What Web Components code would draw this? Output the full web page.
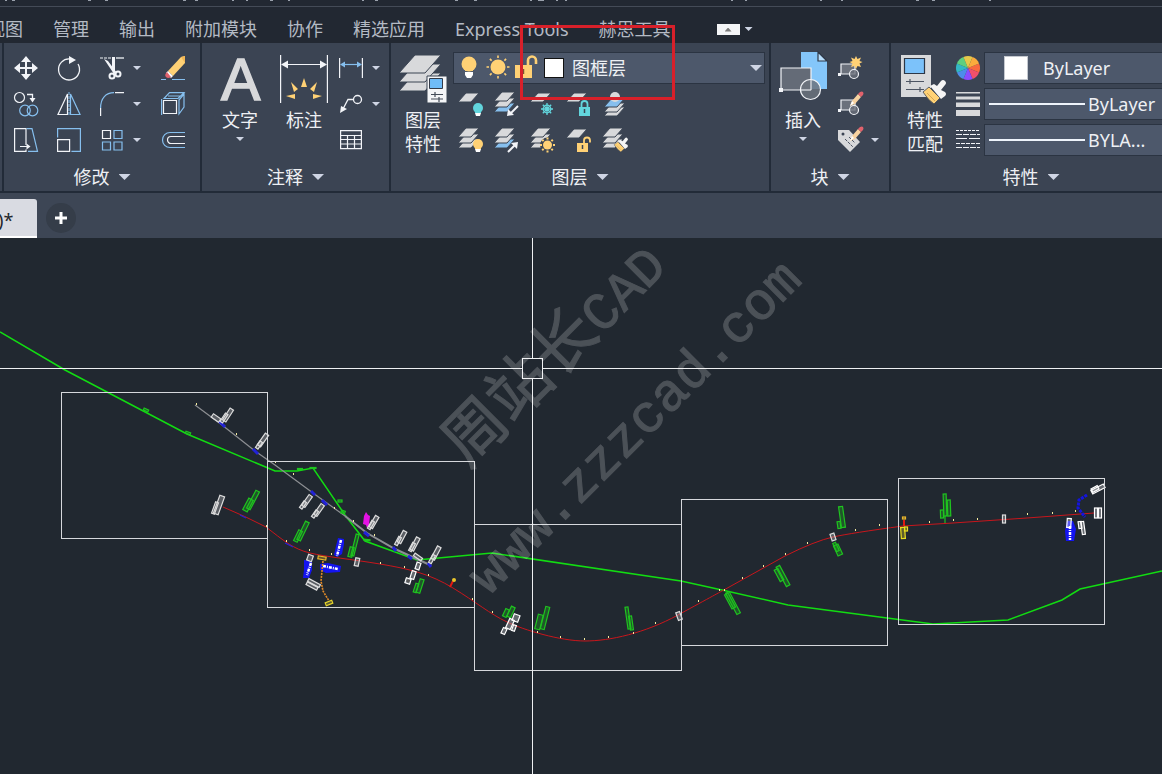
<!DOCTYPE html>
<html lang="zh-CN">
<head>
<meta charset="utf-8">
<title>CAD</title>
<style>
    html, body {
        height: 100%;
        margin: 0;
    }

    body {
        --bar: #222832;
        --ribbon: #3b4453;
        --edge: #222b38;
        --field: #4d586b;
        --caret: #cfd5e4;
        font: 18px/24px "Noto Sans", "Noto Sans CJK SC", sans-serif;
        color: #eef0f4;
        background: #212830;
        overflow: hidden;
    }
</style>
</head>
<body>
<cad-app></cad-app>

<script>
const W = '#f2f4f8';
const B = '#86bfee';
const G = '#d8d9db';
const Y = '#ffd175';
const BG = '#3b4453';

// one sheet of the layer stack
const sheet = (x, y, fill = G, k = 1) =>
    `<path d="M${x + 8 * k} ${y}h${13 * k}l${-8 * k} ${9 * k}h${-13 * k}z" fill="${fill}" stroke="${BG}" stroke-width="1"/>`;
const stack = (a = G, b = G, c = G) => sheet(0, 11, c) + sheet(0, 6, b) + sheet(0, 0, a);
const bulb = (x, y, fill) =>
    `<circle cx="${x}" cy="${y}" r="5" fill="${fill}"/><path d="M${x - 3} ${y + 3}h6v2h-6z" fill="${fill}"/><path d="M${x - 3} ${y + 5}h6l-1 3h-4z" fill="#fff"/>`;
const lock = (x, y, fill, open) =>
    `<path d="M${x} ${y}h11v9h-11z" fill="${fill}"/><path d="M${x + 5.5} ${y + 2}v4" stroke="${BG}" stroke-width="1.5"/>` +
    `<path d="${open ? `M${x + 7} ${y}v-2.500a3 3 0 0 1 6 0v2` : `M${x + 2.500} ${y}v-3a3 3 0 0 1 6 0v3`}" fill="none" stroke="${fill}" stroke-width="1.8"/>`;
const pencil = (x, y) =>
    `<g transform="translate(${x} ${y})"><path d="M0 13l2-5 6-7 3 3-6 7z" fill="#f8d3a0"/><path d="M0 13l2-5 2 2z" fill="#fff"/><path d="M8 1l2-2q2-1 3 0t0 3l-2 2z" fill="#e0626c"/></g>`;
const brush = (x, y, k = 1) =>
    `<g transform="translate(${x} ${y}) scale(${k})"><path d="M-3 3l6-5 11 11-6 6q-6-4-11-12z" fill="${Y}" stroke="${BG}" stroke-width=".8"/><path d="M1 4l8 8" stroke="#b88c40" stroke-width=".6"/><path d="M4-3l4-2 3 2 4-5q2-2 4 0t0 4l-4 5 4 2q2 2 0 4l-4 3z" fill="#f5f5f5"/></g>`;
const blockGlyph = `<path d="M3 8h14v10H3z" fill="#6b717c" stroke="${W}" stroke-width="1.200"/><path d="M0 17h3v3H0z" fill="${W}"/><circle cx="16" cy="18" r="4.500" fill="#6b717c" fill-opacity=".8" stroke="${W}" stroke-width="1.200"/>`;
const rays = (cx, cy, r1, r2, n, c, w) => {
    let d = '';
    for (let i = 0; i < n; i++) {
        const a = i * 2 * Math.PI / n;
        d += `M${(cx + r1 * Math.cos(a)).toFixed(1)} ${(cy + r1 * Math.sin(a)).toFixed(1)}L${(cx + r2 * Math.cos(a)).toFixed(1)} ${(cy + r2 * Math.sin(a)).toFixed(1)}`;
    }
    return `<path d="${d}" stroke="${c}" stroke-width="${w}"/>`;
};
const wheel = () => {
    const colors = ['#f9693f', '#f0506b', '#8b4dff', '#4d8dea', '#33b8c4', '#5fcf7e', '#e6c84a', '#fbab3c'];
    return colors.map((c, i) => {
        const p = k => `${(12 + 12 * Math.cos(k * Math.PI / 4)).toFixed(2)} ${(12 + 12 * Math.sin(k * Math.PI / 4)).toFixed(2)}`;
        return `<path d="M12 12L${p(i - .5)}A12 12 0 0 1 ${p(i + .5)}z" fill="${c}"/>`;
    }).join('');
};

const ICONS = {
    move: `<path d="M12 3v18M3 12h18" stroke="${W}" stroke-width="2"/><path d="M12 0l5 6H7zM12 24l5-6H7zM0 12l6-5v10zM24 12l-6-5v10z" fill="${W}"/>`,
    rotate: `<path d="M13 3a10.500 10.500 0 1 0 8 5" fill="none" stroke="${W}" stroke-width="1.300"/><path d="M12 0l7 4-7 4z" fill="${W}"/>`,
    trim: `<path d="M0 2h12" stroke="${W}" stroke-dasharray="3 1"/><path d="M16 2h8" stroke="${W}" stroke-width="1.300"/><path d="M12 1l3 0v14l-3-1zM4 3l4 2 9 12-3 1z" fill="${W}"/><circle cx="12" cy="20" r="2.500" fill="none" stroke="${W}" stroke-width="2"/><circle cx="18" cy="18" r="2.500" fill="none" stroke="${W}" stroke-width="2"/>`,
    erase: `<path d="M0 23.500h5M11 23.500h13" stroke="${B}"/><path d="M7 15L20 1l4-1v7L12 20z" fill="${Y}"/><path d="M20 1l4-1v7z" fill="#f2b755"/><path d="M7 15l5 5-2 2-5-5z" fill="#fff"/><path d="M6 16l4 5q-3 2-5 0t1-5z" fill="#e0626c"/>`,
    copy: `<circle cx="5.500" cy="5.500" r="5" fill="none" stroke="${W}" stroke-width="1.200"/><path d="M13 2.500h5.500V6" fill="none" stroke="${W}" stroke-width="1.300"/><path d="M15.500 6h6l-3 4.500z" fill="${W}"/><circle cx="11" cy="18.500" r="5.300" fill="none" stroke="${B}" stroke-width="1.200"/><circle cx="18.500" cy="18.500" r="5.300" fill="none" stroke="${B}" stroke-width="1.200"/>`,
    mirror: `<path d="M10.500 2v20.500H1z" fill="none" stroke="${W}" stroke-width="1.200"/><path d="M13.500 2v20.500H23z" fill="none" stroke="${B}" stroke-width="1.200"/><path d="M12 0v24" stroke="${B}" stroke-dasharray="3 1"/>`,
    fillet: `<path d="M.6 16C.6 6 6 .6 14 .6" fill="none" stroke="${B}" stroke-width="1.200"/><path d="M15 .6h9M.6 16v8" stroke="${W}" stroke-width="1.200"/>`,
    box: `<path d="M2.500 8.500h13v13h-13z" fill="none" stroke="${W}" stroke-width="1.200"/><path d="M.6 7v16M3 6.500L8.500.6H23L17 6.500zM18 8l5-6v13l-5 7zM7 4h12" fill="none" stroke="${B}" stroke-width="1.200"/>`,
    stretch: `<path d="M12 17V.6H.6v22.800H12v-2M6 18.500h8" fill="none" stroke="${W}" stroke-width="1.200"/><path d="M12.500 15.500l4 3-4 3z" fill="${W}"/><path d="M12.500.6H18l5.500 22.800H14" fill="none" stroke="${B}" stroke-width="1.200"/>`,
    scale: `<path d="M.6 9.500V.6h22.800v22.800h-9" fill="none" stroke="${B}" stroke-width="1.200"/><path d="M.6 11.600h12v11.800H.6z" fill="none" stroke="${W}" stroke-width="1.200"/>`,
    array: `<path d="M2.500 2.500h8v8h-8z" fill="none" stroke="${W}" stroke-width="1.200"/><path d="M14 2.500h8v8h-8zM2.500 14h8v8h-8zM14 14h8v8h-8z" fill="none" stroke="${B}" stroke-width="1.200"/>`,
    offset: `<path d="M24 4.500H9a7.500 7.500 0 0 0 0 15h15" fill="none" stroke="${B}" stroke-width="1.200"/><path d="M24 8.500H10a3.500 3.500 0 0 0 0 7h14" fill="none" stroke="${W}" stroke-width="1.200"/>`,
    text: `<text x="5" y="45" font-family="Liberation Sans" font-size="59" fill="${G}" stroke="${G}" stroke-width="1.500">A</text>`,
    dimension: `<path d="M.6 0v48M47.400 0v48M3 9.500h42" stroke="${W}" stroke-width="1.200"/><path d="M1 9.500l7-4v8zM47 9.500l-7-4v8z" fill="${W}"/><path d="M24 23l3 9h-6zM11 27l7 7-4 3zM37 27l-7 7 4 3zM6 41l9-2v5zM42 41l-9-2v5z" fill="${Y}"/>`,
    linear: `<path d="M.6 2v20M23.400 2v20" stroke="${W}" stroke-width="1.200"/><path d="M3 8.500h18" stroke="${B}" stroke-width="1.200"/><path d="M1 8.500l5-3v6zM23 8.500l-5-3v6z" fill="${B}"/>`,
    leader: `<circle cx="18.500" cy="7.500" r="4" fill="none" stroke="${W}" stroke-width="1.300"/><path d="M14 7.500H9L4 17" fill="none" stroke="${W}" stroke-width="1.300"/><path d="M1 21l1-7 6 3z" fill="${W}"/>`,
    table: `<path d="M1.600 2.600h20.800v18H1.600zM1.600 7.500h20.800M1.600 11.500h20.800M1.600 16h20.800M8.500 7.500v13M15.500 7.500v13" fill="none" stroke="${W}" stroke-width="1.200"/>`,
    layers: `${sheet(0, 18, G, 2)}${sheet(0, 9, G, 2)}${sheet(0, 0, G, 2)}<path d="M28 21h20v27H28z" fill="#f4f5f7" stroke="${BG}"/><path d="M30.500 23.500h13v10h-13z" fill="#6fbcf8" stroke="#333b48"/><path d="M32 39.500h12M32 44h12M36 37v5M40 42v5" stroke="#444c58" stroke-width="1.200"/>`,
    layerOff: sheet(0, 1) + bulb(20, 16, '#62d5dd'),
    layerIso: stack(G, G, B) + `<path d="M24 14l-8 8" stroke="${W}" stroke-width="2"/><path d="M13 24l1-7 6 6z" fill="${W}"/>`,
    layerFreeze: sheet(0, 1) + rays(17, 17, 0, 6, 8, '#62d5dd', 1.3) + `<circle cx="17" cy="17" r="3.800" fill="none" stroke="#62d5dd" stroke-width="1.200"/>`,
    layerLock: sheet(0, 1) + lock(13, 15, '#62d5dd', false),
    layerCurrent: sheet(2, 15) + sheet(2, 11) + sheet(2, 6, B) + `<circle cx="13" cy="5" r="5" fill="${G}"/>`,
    layerOn: stack() + bulb(20, 16, Y),
    layerUniso: stack(G, G, B) + `<path d="M14 24l7-7" stroke="${W}" stroke-width="2"/><path d="M24 14l-1 7-6-6z" fill="${W}"/>`,
    layerThaw: stack() + `<circle cx="17.500" cy="17" r="7.500" fill="${BG}"/><circle cx="17.500" cy="17" r="4.500" fill="${Y}"/>` + rays(17.5, 17, 5.5, 7.5, 8, Y, 2),
    layerUnlock: sheet(0, 1) + lock(11, 15, Y, true),
    layerMatch: stack() + brush(14, 15, .6),
    bulb: `<circle cx="12" cy="8" r="7.500" fill="${Y}"/><path d="M8 11h8v4H8z" fill="${Y}"/><path d="M8 16h8v3l-2 3h-4l-2-3z" fill="#fff"/>`,
    sun: `<circle cx="12" cy="11" r="7.500" fill="${Y}"/>` + rays(12, 11, 9, 11.5, 8, Y, 1.6),
    unlock: `<path d="M0 9h17v13H0z" fill="${Y}"/><path d="M8.500 13v5" stroke="#7a5530" stroke-width="1.500"/><path d="M13 9V4.500a4 4 0 0 1 8 0V8" fill="none" stroke="${Y}" stroke-width="2.600"/>`,
    insert: `<path d="M22-3h17l9 9v28H22z" fill="#84c6fa"/><path d="M39-3v9h9z" fill="#b8defc" stroke="#2d3746" stroke-width="1.200"/><path d="M2 13h30v22H2z" fill="#646b77" stroke="${W}" stroke-width="1.200"/><path d="M0 33h4v4H0z" fill="${W}"/><circle cx="31.500" cy="34.500" r="10" fill="#6b727d" fill-opacity=".85" stroke="${W}" stroke-width="1.200"/><path d="M32 25v10h-10" fill="none" stroke="${W}"/>`,
    blockNew: blockGlyph + `<path d="M18 0l1.500 3L23 1.500 21.500 5l3 1-3 1.500L23 11l-3.500-1L18 13l-1.500-3L13 11l1.500-3.500-3-1.500 3-1L13 1.500 16.500 3z" fill="${Y}"/>`,
    blockEdit: blockGlyph + pencil(12, 1),
    attribute: `<path d="M0 2h11l11 12-10 10L0 12z" fill="${G}"/><circle cx="5" cy="6" r="1.500" fill="#3b4453"/><path d="M7 11l8 8M11 9l6 6" stroke="#4d5563" stroke-dasharray="3 1"/>` + pencil(12, 0),
    match: `<path d="M0 0h30v42H0z" fill="${G}"/><path d="M3.500 3.500h20v15h-20z" fill="#7cc2fa" stroke="#2d3746" stroke-width="1.200"/><path d="M5 26.500h18M5 34.500h18M9 24v5M19 32v5" stroke="#4d5563" stroke-width="1.200"/>` + brush(25, 34),
    wheel: wheel(),
    weight: `<path d="M0 0h24v1.500H0zM0 4.500h24v3H0zM0 10.500h24v4.500H0zM0 18h24v6H0z" fill="${G}"/>`,
    linetype: `<path d="M0 2.500h24" stroke="${W}" stroke-dasharray="3 1"/><path d="M0 6.500h24M0 19.500h24" stroke="${W}" stroke-dasharray="6 1"/><path d="M0 10.500h24" stroke="${W}" stroke-dasharray="11 2"/><path d="M0 15.500h24" stroke="${W}" stroke-dasharray="4 1"/>`
};

class CadIcon extends HTMLElement {
    constructor() {
        super();
        this.attachShadow({ mode: 'open' });
    }

    connectedCallback() {
        const size = this.getAttribute('size') || 24;
        this.shadowRoot.innerHTML = `
            <style>
                :host { display: block; flex: none; }
                svg { display: block; overflow: visible; }
            </style>
            <svg width="${size}" height="${size}" viewBox="0 0 ${size} ${size}" aria-hidden="true">${ICONS[this.getAttribute('name')] || ''}</svg>
        `;
    }
}

class CadCaret extends HTMLElement {
    constructor() {
        super();
        this.attachShadow({ mode: 'open' }).innerHTML = `
            <style>
                :host {
                    display: block;
                    flex: none;
                    width: 8px;
                    height: 4px;
                    background: var(--caret);
                    clip-path: polygon(0 0, 100% 0, 50% 100%);
                }

                :host([large]) { width: 12px; height: 6px; }
            </style>
        `;
    }
}

// small tool, with a caret when it opens a menu
class CadTool extends HTMLElement {
    constructor() {
        super();
        this.attachShadow({ mode: 'open' });
    }

    connectedCallback() {
        const label = this.getAttribute('label');
        this.shadowRoot.innerHTML = `
            <style>
                :host { display: flex; align-items: center; gap: 9px; height: 36px; }
                button { all: unset; display: block; cursor: pointer; }
                .more { padding: 6px 0; }
            </style>
            <button aria-label="${label}"><cad-icon name="${this.getAttribute('icon')}"></cad-icon></button>
            ${this.hasAttribute('menu') ? `<button class="more" aria-label="${label} ▾"><cad-caret></cad-caret></button>` : ''}
        `;
    }
}

class CadBigTool extends HTMLElement {
    constructor() {
        super();
        this.attachShadow({ mode: 'open' });
    }

    connectedCallback() {
        this.shadowRoot.innerHTML = `
            <style>
                :host { display: block; flex: none; padding-top: 5px; }

                button {
                    all: unset;
                    display: flex;
                    flex-direction: column;
                    align-items: center;
                    gap: 5px;
                    width: 48px;
                    text-align: center;
                    cursor: pointer;
                }
            </style>
            <button>
                <cad-icon size="48" name="${this.getAttribute('icon')}"></cad-icon>
                <span><slot></slot></span>
                ${this.hasAttribute('menu') ? '<cad-caret></cad-caret>' : ''}
            </button>
        `;
    }
}

class CadPanel extends HTMLElement {
    constructor() {
        super();
        this.attachShadow({ mode: 'open' });
    }

    connectedCallback() {
        this.shadowRoot.innerHTML = `
            <style>
                :host {
                    display: flex;
                    flex-direction: column;
                    flex: none;
                    box-sizing: border-box;
                    padding: 7px 0 2px;
                    border-right: 2px solid var(--edge);
                }

                .tools { display: flex; height: 108px; padding: 0 var(--pad-right, 0) 0 var(--pad-left, 10px); }

                button {
                    all: unset;
                    display: flex;
                    align-items: center;
                    justify-content: center;
                    gap: 9px;
                    margin-top: 7px;
                    cursor: pointer;
                }
            </style>
            <div class="tools"><slot></slot></div>
            <button>${this.getAttribute('label')}<cad-caret large></cad-caret></button>
        `;
    }
}

class CadSelect extends HTMLElement {
    constructor() {
        super();
        this.attachShadow({ mode: 'open' });
    }

    connectedCallback() {
        this.shadowRoot.innerHTML = `
            <style>
                :host {
                    display: flex;
                    align-items: center;
                    box-sizing: border-box;
                    height: 32px;
                    padding-right: 2px;
                    border: 1px solid #2b3442;
                    background: var(--field);
                }

                select {
                    appearance: none;
                    flex: 1;
                    min-width: 0;
                    padding: 0;
                    border: 0;
                    background: none;
                    color: inherit;
                    font: inherit;
                }
            </style>
            <slot></slot>
            <select aria-label="${this.getAttribute('label')}"><option>${this.getAttribute('value')}</option></select>
            <cad-caret large></cad-caret>
        `;
    }
}

class CadTabs extends HTMLElement {
    constructor() {
        super();
        this.attachShadow({ mode: 'open' });
        const tabs = ['视图', '管理', '输出', '附加模块', '协作', '精选应用', 'Express Tools', '赫思工具'];
        this.shadowRoot.innerHTML = `
            <style>
                :host { display: block; background: var(--bar); overflow: hidden; }

                .strip {
                    display: block;
                    height: 6px;
                    border-bottom: 1px solid #444b57;
                }

                nav {
                    display: flex;
                    align-items: center;
                    gap: 30px;
                    box-sizing: border-box;
                    height: 36px;
                    margin-left: -13px;
                    padding-top: 8px;
                    white-space: nowrap;
                }

                a { color: #b4bac4; text-decoration: none; }

                .fold { display: flex; align-items: center; gap: 5px; margin-left: 16px; }

                button { all: unset; display: block; cursor: pointer; }
                .box { padding: 4px 8px 3px; background: #f4f5f7; }
                .box i { display: block; width: 7px; height: 4px; background: #7b7b7b; clip-path: polygon(0 100%, 50% 0, 100% 100%); }
            </style>
            <svg class="strip" width="100%" aria-hidden="true">
                <path d="M5 0h2M12 0h3M88 0h3M105 0h3M183 0h3M195 0h3M232 0h2M246 0h2M270 0h3M288 0h2M362 0h2M375 0h3M455 0h3M474 0h3M530 0h2M538 0h6M556 0h2M565 0h2M731 0h2M745 0h2M820 0h2M841 0h2M916 0h3M932 0h3M989 0h2" stroke="#9aa1ac" stroke-width="2"/>
            </svg>
            <nav>
                ${tabs.map(t => `<a href="#">${t}</a>`).join('')}
                <div class="fold">
                    <button class="box" aria-label="最小化"><i></i></button>
                    <button aria-label="▾"><cad-caret></cad-caret></button>
                </div>
            </nav>
        `;
    }
}

class CadRibbon extends HTMLElement {
    constructor() {
        super();
        this.attachShadow({ mode: 'open' }).innerHTML = `
            <style>
                :host {
                    display: flex;
                    padding-left: 2px;
                    border-bottom: 2px solid var(--edge);
                    background: var(--ribbon);
                    overflow: hidden;
                }

                .modify { border-left: 2px solid var(--edge); --pad-right: 15px; }
                .annotate { --pad-left: 14px; --pad-right: 9px; }
                .layer { --pad-left: 8px; --pad-right: 4px; }
                .block { --pad-left: 8px; --pad-right: 10px; }
                .props { flex: 1 0 282px; min-width: 0; --pad-left: 10px; }

                .grid { display: grid; grid-template-columns: 24px 24px 42px 24px; column-gap: 19px; }
                .two { display: flex; gap: 16px; }
                .col { display: flex; flex-direction: column; margin-left: 11px; }
                .row { display: flex; gap: 12px; padding-left: 5px; }
                .wide { width: 312px; margin: 2px 0; }
                .layers { margin-left: 6px; }
                .icons { display: flex; align-items: center; gap: 5px; padding: 0 8px 0 3px; }
                .chip { width: 18px; height: 18px; border: 1px solid #111; background: #fff; }
                .big { width: 22px; height: 22px; margin: 0 15px 0 19px; border-color: #c4c8cf; }
                .marks { margin-left: 7px; }
                .fields { flex: 1 0 210px; margin-left: 4px; padding-top: 2px; gap: 4px; }
                .line { width: 96px; height: 2px; margin: 0 3px 0 4px; background: #eef4fb; }
            </style>
            <cad-panel class="modify" label="修改">
                <div class="grid">
                    <cad-tool icon="move" label="移动"></cad-tool>
                    <cad-tool icon="rotate" label="旋转"></cad-tool>
                    <cad-tool icon="trim" label="修剪" menu></cad-tool>
                    <cad-tool icon="erase" label="删除"></cad-tool>
                    <cad-tool icon="copy" label="复制"></cad-tool>
                    <cad-tool icon="mirror" label="镜像"></cad-tool>
                    <cad-tool icon="fillet" label="圆角" menu></cad-tool>
                    <cad-tool icon="box" label="分解"></cad-tool>
                    <cad-tool icon="stretch" label="拉伸"></cad-tool>
                    <cad-tool icon="scale" label="缩放"></cad-tool>
                    <cad-tool icon="array" label="阵列" menu></cad-tool>
                    <cad-tool icon="offset" label="偏移"></cad-tool>
                </div>
            </cad-panel>
            <cad-panel class="annotate" label="注释">
                <div class="two">
                    <cad-big-tool icon="text" menu>文字</cad-big-tool>
                    <cad-big-tool icon="dimension">标注</cad-big-tool>
                </div>
                <div class="col">
                    <cad-tool icon="linear" label="线性" menu></cad-tool>
                    <cad-tool icon="leader" label="引线" menu></cad-tool>
                    <cad-tool icon="table" label="表格"></cad-tool>
                </div>
            </cad-panel>
            <cad-panel class="layer" label="图层">
                <cad-big-tool icon="layers">图层<br>特性</cad-big-tool>
                <div class="col layers">
                    <cad-select class="wide" label="图层" value="图框层">
                        <span class="icons">
                            <cad-icon name="bulb"></cad-icon>
                            <cad-icon name="sun"></cad-icon>
                            <cad-icon name="unlock"></cad-icon>
                            <span class="chip"></span>
                        </span>
                    </cad-select>
                    <div class="row">
                        <cad-tool icon="layerOff" label="关闭"></cad-tool>
                        <cad-tool icon="layerIso" label="隔离"></cad-tool>
                        <cad-tool icon="layerFreeze" label="冻结"></cad-tool>
                        <cad-tool icon="layerLock" label="锁定"></cad-tool>
                        <cad-tool icon="layerCurrent" label="置为当前"></cad-tool>
                    </div>
                    <div class="row">
                        <cad-tool icon="layerOn" label="打开所有图层"></cad-tool>
                        <cad-tool icon="layerUniso" label="取消隔离"></cad-tool>
                        <cad-tool icon="layerThaw" label="解冻所有图层"></cad-tool>
                        <cad-tool icon="layerUnlock" label="解锁"></cad-tool>
                        <cad-tool icon="layerMatch" label="匹配图层"></cad-tool>
                    </div>
                </div>
            </cad-panel>
            <cad-panel class="block" label="块">
                <cad-big-tool icon="insert" menu>插入</cad-big-tool>
                <div class="col">
                    <cad-tool icon="blockNew" label="创建"></cad-tool>
                    <cad-tool icon="blockEdit" label="编辑"></cad-tool>
                    <cad-tool icon="attribute" label="编辑属性" menu></cad-tool>
                </div>
            </cad-panel>
            <cad-panel class="props" label="特性">
                <cad-big-tool icon="match">特性<br>匹配</cad-big-tool>
                <div class="col marks">
                    <cad-tool icon="wheel" label="对象颜色"></cad-tool>
                    <cad-tool icon="weight" label="线宽"></cad-tool>
                    <cad-tool icon="linetype" label="线型"></cad-tool>
                </div>
                <div class="col fields">
                    <cad-select label="对象颜色" value="ByLayer"><span class="chip big"></span></cad-select>
                    <cad-select label="线宽" value="ByLayer"><span class="line"></span></cad-select>
                    <cad-select label="线型" value="BYLA..."><span class="line"></span></cad-select>
                </div>
            </cad-panel>
        `;
    }
}

class CadFiles extends HTMLElement {
    constructor() {
        super();
        this.attachShadow({ mode: 'open' }).innerHTML = `
            <style>
                :host {
                    display: flex;
                    align-items: center;
                    gap: 9px;
                    box-sizing: border-box;
                    height: 45px;
                    padding-top: 4px;
                    background: #3d4655;
                }

                button { all: unset; cursor: pointer; }

                .tab {
                    align-self: flex-end;
                    box-sizing: border-box;
                    width: 37px;
                    height: 39px;
                    padding-top: 4px;
                    border-bottom: 2px solid #fff;
                    border-radius: 0 3px 0 0;
                    background: #d9dbe2;
                    color: #22262c;
                    text-indent: -2px;
                }

                .add {
                    width: 30px;
                    height: 30px;
                    border-radius: 50%;
                    background: #353d49;
                }

                svg { display: block; margin: 9px; }
            </style>
            <button class="tab">)*</button>
            <button class="add" aria-label="新图形"><svg width="12" height="12"><path d="M6 0v12M0 6h12" stroke="#fff" stroke-width="3"/></svg></button>
        `;
    }
}

// buildings along the road: x, y of the centre, width, height, angle, colour
const BUILDINGS = [
    [228, 415, 4, 14, 33, '#ddd'], [224, 418, 3, 10, 33, '#ddd'], [216, 418, 4, 9, -55, '#ddd'],
    [263, 440, 4, 14, 35, '#ddd'], [259, 445, 3, 8, 35, '#ddd'],
    [219, 505, 5, 19, 20, '#ddd'], [215, 508, 3, 12, 20, '#ddd'],
    [253, 500, 4, 20, 28, '#1fc41f'], [248, 505, 5, 13, 28, '#1fc41f'],
    [303, 531, 4, 20, 26, '#1fc41f'], [298, 536, 4, 12, 26, '#1fc41f'],
    [307, 501, 4, 13, 35, '#ddd'], [303, 505, 3, 8, 35, '#ddd'],
    [319, 510, 4, 13, 35, '#ddd'], [315, 514, 3, 8, 35, '#ddd'],
    [374, 522, 4, 13, 30, '#ddd'], [371, 525, 3, 9, 30, '#ddd'],
    [402, 537, 4, 13, 28, '#ddd'], [398, 541, 3, 9, 28, '#ddd'],
    [415, 544, 4, 14, 28, '#ddd'], [412, 547, 3, 9, 28, '#ddd'],
    [436, 553, 4, 14, 28, '#ddd'], [432, 559, 3, 9, 28, '#ddd'],
    [355, 545, 3, 22, 14, '#1fc41f'], [351, 552, 4, 10, 14, '#1fc41f'],
    [420, 586, 4, 14, 18, '#1fc41f'], [416, 588, 3, 9, 18, '#1fc41f'],
    [357, 562, 4, 8, 12, '#ddd'], [310, 558, 5, 6, 20, '#ddd'],
    [314, 583, 13, 3, 28, '#ddd'], [312, 586, 12, 3, 28, '#ddd'],
    [322, 558, 8, 3, 10, '#e9b62c'], [329, 603, 7, 3, -22, '#e5d32c'],
    [418, 557, 9, 3, 35, '#ddd'], [418, 566, 4, 7, 18, '#fff'], [413, 575, 4, 8, 18, '#fff'], [408, 581, 5, 5, 18, '#fff'],
    [511, 612, 4, 11, 25, '#1fc41f'], [506, 613, 4, 8, 25, '#1fc41f'],
    [516, 618, 6, 7, 20, '#fff'], [510, 624, 5, 10, 25, '#fff'], [504, 631, 4, 6, 25, '#fff'], [514, 628, 3, 6, 20, '#fff'],
    [545, 618, 4, 23, 14, '#1fc41f'], [539, 622, 5, 15, 14, '#1fc41f'],
    [628, 618, 3, 22, -8, '#1fc41f'], [631, 623, 3, 14, -8, '#1fc41f'],
    [679, 616, 4, 8, -20, '#ddd'],
    [733, 603, 4, 24, -28, '#1fc41f'], [730, 601, 4, 16, -28, '#1fc41f'],
    [783, 576, 4, 22, -28, '#1fc41f'], [779, 575, 4, 13, -28, '#1fc41f'],
    [842, 517, 4, 21, -8, '#1fc41f'], [839, 525, 3, 7, -8, '#1fc41f'],
    [838, 550, 5, 11, -25, '#1fc41f'], [836, 547, 3, 9, -25, '#1fc41f'],
    [833, 537, 4, 7, -18, '#ddd'],
    [903, 533, 4, 11, -4, '#eadf20'], [906, 529, 3, 4, 0, '#eadf20'], [904, 518, 3, 2, 0, '#e9b62c'],
    [945, 505, 3, 22, -2, '#1fc41f'], [949, 508, 3, 16, -2, '#1fc41f'], [942, 514, 3, 8, -2, '#1fc41f'],
    [1004, 519, 3, 8, 0, '#ddd'],
    [1098, 489, 14, 4, -28, '#fff'], [1095, 489, 7, 4, -28, '#fff'],
    [1096, 513, 3, 10, 0, '#fff'], [1100, 513, 3, 10, 0, '#fff'],
    [1083, 528, 3, 13, -8, '#fff'], [1080, 525, 3, 7, -8, '#fff'], [1069, 523, 4, 9, 4, '#fff'],
    [146, 410, 5, 2, 25, '#1fc41f'], [188, 433, 5, 2, 20, '#1fc41f'], [300, 469, 5, 1, 0, '#1fc41f'], [313, 468, 6, 1, 0, '#1fc41f'],
    [340, 501, 4, 2, 0, '#1fc41f'], [343, 512, 4, 3, 20, '#1fc41f'], [367, 540, 6, 1, 5, '#1fc41f']
];

const STATIONS = [[266, 526], [286, 541], [309, 550], [331, 554], [380, 563], [404, 567], [428, 575], [472, 599], [492, 612],
    [537, 632], [560, 637], [584, 639], [608, 637], [633, 633], [655, 623], [698, 601], [719, 590], [724, 590], [742, 578],
    [763, 566], [785, 554], [807, 543], [855, 530], [879, 525], [929, 522], [953, 520], [977, 519], [1027, 514], [1052, 513], [1075, 511],
    [196, 404], [236, 434], [275, 462], [293, 474], [334, 508], [353, 521], [374, 535]];

class CadDrawing extends HTMLElement {
    constructor() {
        super();
        this.attachShadow({ mode: 'open' });
        const frames = [[61, 392, 206], [267, 461, 207], [474, 524, 207], [681, 499, 206], [898, 478, 206]];
        this.shadowRoot.innerHTML = `
            <style>
                :host { display: block; min-height: 0; background: #212830; overflow: hidden; }
                svg { display: block; width: 100%; height: 100%; }
                .frames, .cursor { fill: none; stroke: #d6d8dc; shape-rendering: crispEdges; }
                .cursor { stroke: #eef0f2; }
                .mark { fill: #fff; stroke: #fff; stroke-width: 1; opacity: .19; font-family: "Liberation Mono", "Noto Sans CJK SC", monospace; }
            </style>
            <svg viewBox="0 238 1162 536" preserveAspectRatio="xMinYMin slice">
                <path fill="none" stroke="#12dc12" stroke-width="1.500" d="M0 332L65 370 107 392 187 434 268 468 275 471 297 471 313 468 345 515 365 541 417 560 492 553 681 581 722 590 788 605 910 621 933 624 1008 620 1062 600 1080 589 1162 571"/>
                <path fill="none" stroke="#8d8f93" stroke-width="1.200" d="M195 405L222 425 255 451 275 465 313 493 345 516"/>
                <path fill="none" stroke="#8d8f93" stroke-width="2" d="M345 516L367 533 395 549 430 565"/>
                <path fill="none" stroke="#c8161c" stroke-width="1" d="M223 507Q245 516 266 527C283 540 293 549 310 553S350 559 380 564 430 574 453 588 490 614 507 622 560 641 585 641 645 633 678 615 722 591 722 591L785 556Q815 541 833 537T903 526L953 523 1027 518 1094 513"/>
                <path stroke="#2222d8" stroke-width="3" d="M219 421l6 6M253 449l5 5M311 491l4 4M322 500l5 5M364 532l5 4M393 547l3 4M408 556l4 3M428 563l3 4"/>
                <path stroke="#2222d8" stroke-width="1.200" d="M240 515l6 3M285 543l8 4"/>
                <path d="M338 538l6 1 0 5-2 10-5 3-3-2 2-9zM304 560l8 1 0 9-3 8-6 0 1-8zM320 564l8-1 13 3-1 6-14 1-6-3zM1067 521l6 0 3 8-2 12-8 0-1-10z" fill="#1414f0"/>
                <path fill="none" stroke="#fff" stroke-width="2.500" stroke-dasharray="3 1 1 1" d="M341 540l-4 16M311 563l-4 12M323 566l15 3M1070 526v14"/>
                <path fill="none" stroke="#1414e0" stroke-width="3" stroke-dasharray="3 1" d="M1087 495l-8 5-1 8 7 9"/>
                <path fill="none" stroke="#e08a28" stroke-width="1.600" stroke-dasharray="2 1" d="M323 561l-2 20 2 10 6 10"/>
                <path stroke="#e01a12" stroke-width="2" d="M450 587l3-6M904 520v6"/>
                <circle cx="454" cy="580" r="2" fill="#e9c62c"/>
                <path d="M366 512l2 3 2 1-1 9-2 3-1-3-3-1 1-8z" fill="#e412e4"/>
                <path d="M418 562h3v3h-3zM407 580h3v2h-3z" fill="#111"/>
                <path stroke="#1fc41f" stroke-width="1.200" d="M945 516v7"/>
                <g fill-opacity=".3" stroke-width="1.200">${BUILDINGS.map(([x, y, w, h, a, c]) => `<rect x="${x - w / 2}" y="${y - h / 2}" width="${w}" height="${h}" fill="${c}" stroke="${c}" transform="rotate(${a} ${x} ${y})"/>`).join('')}</g>
                <g fill="#f7eda0">${STATIONS.map(([x, y]) => `<rect x="${x}" y="${y - 1}" width="1" height="2"/>`).join('')}</g>
                <g class="frames">${frames.map(([x, y, w]) => `<rect x="${x + .5}" y="${y + .5}" width="${w}" height="146"/>`).join('')}</g>
                <path class="cursor" d="M532.500 238v120M532.500 379v395M0 368.500h522M543 368.500h619M522.500 358.500h20v20h-20z"/>
                <text class="mark" font-size="63" transform="translate(468 469) rotate(-45)">周站长<tspan font-size="53">CAD</tspan></text>
                <text class="mark" font-size="53" transform="translate(489 596) rotate(-45)">www.zzzcad.com</text>
            </svg>
        `;
    }
}

class CadApp extends HTMLElement {
    constructor() {
        super();
        this.attachShadow({ mode: 'open' }).innerHTML = `
            <style>
                :host { display: flex; flex-direction: column; height: 100vh; position: relative; }
                cad-drawing { flex: 1; }

                /* red callout over the layer list */
                .callout {
                    position: absolute;
                    left: 520px;
                    top: 25px;
                    width: 149px;
                    height: 69px;
                    border: 3px solid #d8202a;
                    pointer-events: none;
                }
            </style>
            <cad-tabs></cad-tabs>
            <cad-ribbon></cad-ribbon>
            <cad-files></cad-files>
            <cad-drawing></cad-drawing>
            <div class="callout"></div>
        `;
    }
}

customElements.define('cad-icon', CadIcon);
customElements.define('cad-caret', CadCaret);
customElements.define('cad-tool', CadTool);
customElements.define('cad-big-tool', CadBigTool);
customElements.define('cad-panel', CadPanel);
customElements.define('cad-select', CadSelect);
customElements.define('cad-tabs', CadTabs);
customElements.define('cad-ribbon', CadRibbon);
customElements.define('cad-files', CadFiles);
customElements.define('cad-drawing', CadDrawing);
customElements.define('cad-app', CadApp);
</script>
</body>
</html>
